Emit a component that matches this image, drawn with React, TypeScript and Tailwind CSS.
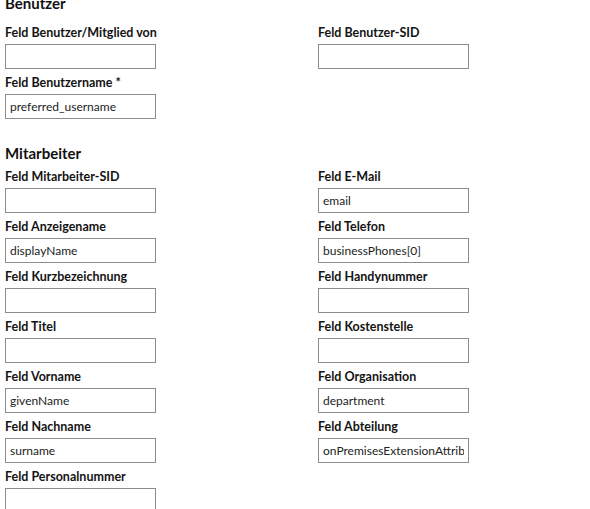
import React from 'react';

type Field = { label: string; value?: string };

const benutzerLeft: Field[] = [
  { label: 'Feld Benutzer/Mitglied von' },
  { label: 'Feld Benutzername *', value: 'preferred_username' },
];
const benutzerRight: Field[] = [{ label: 'Feld Benutzer-SID' }];

const mitarbeiterLeft: Field[] = [
  { label: 'Feld Mitarbeiter-SID' },
  { label: 'Feld Anzeigename', value: 'displayName' },
  { label: 'Feld Kurzbezeichnung' },
  { label: 'Feld Titel' },
  { label: 'Feld Vorname', value: 'givenName' },
  { label: 'Feld Nachname', value: 'surname' },
  { label: 'Feld Personalnummer' },
];
const mitarbeiterRight: Field[] = [
  { label: 'Feld E-Mail', value: 'email' },
  { label: 'Feld Telefon', value: 'businessPhones[0]' },
  { label: 'Feld Handynummer' },
  { label: 'Feld Kostenstelle' },
  { label: 'Feld Organisation', value: 'department' },
  { label: 'Feld Abteilung', value: 'onPremisesExtensionAttribute1' },
];

function FieldRow({ field }: { field: Field }) {
  return (
    <div className="pt-[5px]">
      <label className="block h-[18px] text-[12.5px] leading-[18px] font-bold text-[#141414] whitespace-nowrap">
        {field.label}
      </label>
      <input
        readOnly
        defaultValue={field.value ?? ''}
        className="mt-[2px] block w-[151px] h-[25px] border border-[#8c8c8c] bg-white px-[4px] text-[12px] text-[#222] outline-none"
      />
    </div>
  );
}

function Column({ fields }: { fields: Field[] }) {
  return (
    <div className="flex flex-col">
      {fields.map((f) => (
        <FieldRow key={f.label} field={f} />
      ))}
    </div>
  );
}

export default function App() {
  return (
    <div
      className="w-[590px] h-[509px] overflow-hidden bg-white pl-[5px]"
      style={{ fontFamily: 'Lato, "Noto Sans", sans-serif' }}
    >
      <div className="-mt-[7px]">
        <h2 className="text-[15px] leading-[20px] font-bold text-[#111]">Benutzer</h2>
        <div className="grid grid-cols-[313px_1fr] mt-[6px]">
          <Column fields={benutzerLeft} />
          <Column fields={benutzerRight} />
        </div>
        <h2 className="mt-[24px] text-[15px] leading-[20px] font-bold text-[#111]">Mitarbeiter</h2>
        <div className="grid grid-cols-[313px_1fr]">
          <Column fields={mitarbeiterLeft} />
          <Column fields={mitarbeiterRight} />
        </div>
      </div>
    </div>
  );
}
